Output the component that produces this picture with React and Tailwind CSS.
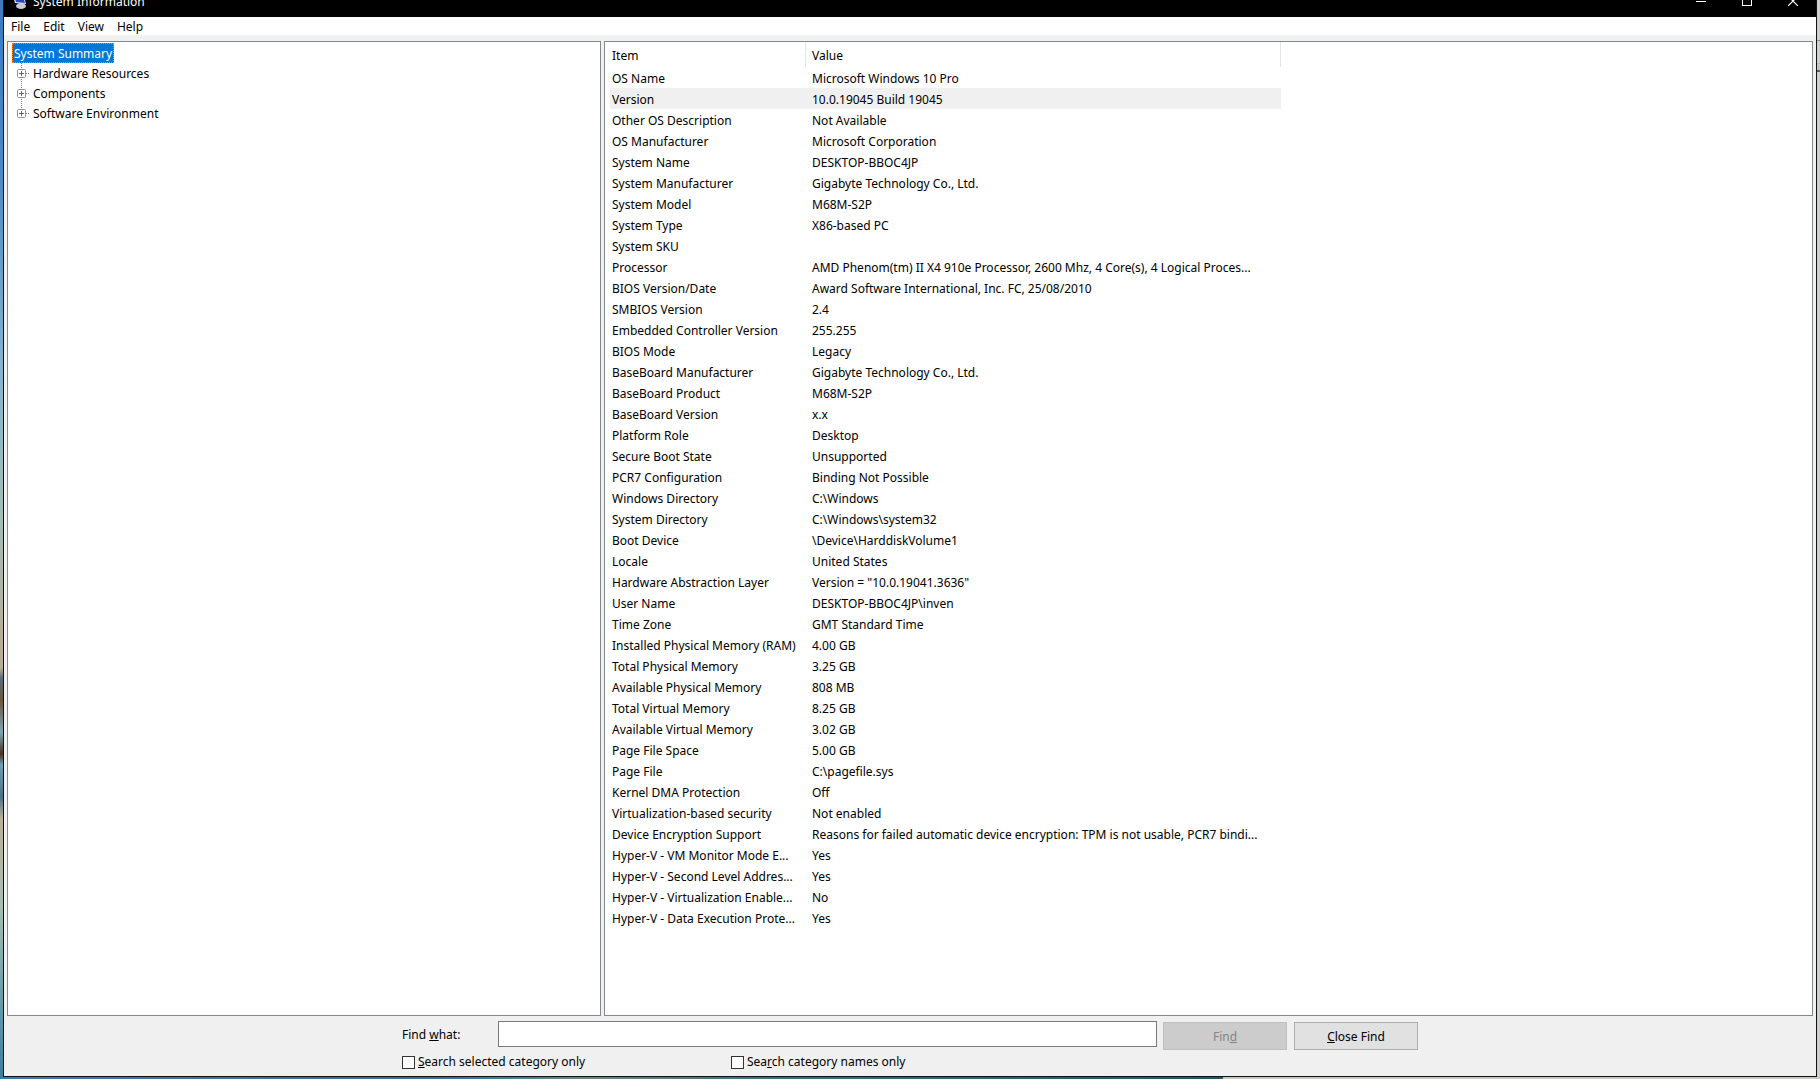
const menus = ['File', 'Edit', 'View', 'Help'];

const categories = ['Hardware Resources', 'Components', 'Software Environment'];

const rows = [
  ['OS Name', 'Microsoft Windows 10 Pro'],
  ['Version', '10.0.19045 Build 19045'],
  ['Other OS Description', 'Not Available'],
  ['OS Manufacturer', 'Microsoft Corporation'],
  ['System Name', 'DESKTOP-BBOC4JP'],
  ['System Manufacturer', 'Gigabyte Technology Co., Ltd.'],
  ['System Model', 'M68M-S2P'],
  ['System Type', 'X86-based PC'],
  ['System SKU', ''],
  ['Processor', 'AMD Phenom(tm) II X4 910e Processor, 2600 Mhz, 4 Core(s), 4 Logical Proces...'],
  ['BIOS Version/Date', 'Award Software International, Inc. FC, 25/08/2010'],
  ['SMBIOS Version', '2.4'],
  ['Embedded Controller Version', '255.255'],
  ['BIOS Mode', 'Legacy'],
  ['BaseBoard Manufacturer', 'Gigabyte Technology Co., Ltd.'],
  ['BaseBoard Product', 'M68M-S2P'],
  ['BaseBoard Version', 'x.x'],
  ['Platform Role', 'Desktop'],
  ['Secure Boot State', 'Unsupported'],
  ['PCR7 Configuration', 'Binding Not Possible'],
  ['Windows Directory', 'C:\\Windows'],
  ['System Directory', 'C:\\Windows\\system32'],
  ['Boot Device', '\\Device\\HarddiskVolume1'],
  ['Locale', 'United States'],
  ['Hardware Abstraction Layer', 'Version = "10.0.19041.3636"'],
  ['User Name', 'DESKTOP-BBOC4JP\\inven'],
  ['Time Zone', 'GMT Standard Time'],
  ['Installed Physical Memory (RAM)', '4.00 GB'],
  ['Total Physical Memory', '3.25 GB'],
  ['Available Physical Memory', '808 MB'],
  ['Total Virtual Memory', '8.25 GB'],
  ['Available Virtual Memory', '3.02 GB'],
  ['Page File Space', '5.00 GB'],
  ['Page File', 'C:\\pagefile.sys'],
  ['Kernel DMA Protection', 'Off'],
  ['Virtualization-based security', 'Not enabled'],
  ['Device Encryption Support', 'Reasons for failed automatic device encryption: TPM is not usable, PCR7 bindi...'],
  ['Hyper-V - VM Monitor Mode E...', 'Yes'],
  ['Hyper-V - Second Level Addres...', 'Yes'],
  ['Hyper-V - Virtualization Enable...', 'No'],
  ['Hyper-V - Data Execution Prote...', 'Yes'],
];

function AppIcon() {
  return (
    <svg width="14" height="16" viewBox="0 0 14 16">
      <ellipse cx="8" cy="13" rx="5" ry="3" fill="#c9ccd6" />
      <path d="M0 3 L11 3 L13 11 L2 10 Z" fill="#e4e8f2" />
      <path d="M1 3 L10 4 L12 10 L3 9 Z" fill="#2b45c0" />
      <path d="M6 4 L10 4 L11 7 Z" fill="#8fa4ee" />
    </svg>
  );
}

function TitleBar() {
  return (
    <header className="-mt-[15px] flex h-8 shrink-0 items-center bg-black pl-[9px] text-white">
      <AppIcon />
      <h1 className="ml-[6px] flex-1 pt-[2px]">System Information</h1>
      <button type="button" aria-label="Minimize" className="flex h-full w-[46px] items-center justify-center">
        <svg width="10" height="10" viewBox="0 0 10 10">
          <path d="M0 5.5H10" stroke="currentColor" />
        </svg>
      </button>
      <button type="button" aria-label="Maximize" className="flex h-full w-[46px] items-center justify-center">
        <svg width="10" height="10" viewBox="0 0 10 10">
          <rect x="0.5" y="0.5" width="9" height="9" fill="none" stroke="currentColor" />
        </svg>
      </button>
      <button type="button" aria-label="Close" className="flex h-full w-[46px] items-center justify-center">
        <svg width="10" height="10" viewBox="0 0 10 10">
          <path d="M0 0L10 10M10 0L0 10" stroke="currentColor" strokeWidth="1.2" />
        </svg>
      </button>
    </header>
  );
}

function CategoryTree() {
  return (
    <nav className="w-[594px] shrink-0 border border-[#828790] bg-white pt-px pl-1">
      <button type="button" className="block h-5 border border-dotted border-[#ff8728] bg-[#0078d7] px-px leading-5 text-white">
        System Summary
      </button>
      <ul>
        {categories.map((name, i) => (
          <li key={name} className="flex h-5 items-center">
            <button type="button" aria-label={`Expand ${name}`} className="ml-[5px]">
              <svg width="13" height="20" viewBox="0 0 13 20">
                <path d="M4.5 0V6M9 10.5H13" stroke="#808080" strokeDasharray="1 1" />
                {i < categories.length - 1 && <path d="M4.5 16V20" stroke="#808080" strokeDasharray="1 1" />}
                <rect x="0.5" y="6.5" width="8" height="8" rx="1" fill="#fff" stroke="#919191" />
                <path d="M2 10.5H7M4.5 8V13" stroke="#4b63a7" />
              </svg>
            </button>
            <span className="ml-[3px] pt-[2px]">{name}</span>
          </li>
        ))}
      </ul>
    </nav>
  );
}

function Details() {
  return (
    <main className="min-w-0 flex-1 overflow-hidden border border-[#828790] bg-white">
      <table className="w-[676px] table-fixed border-separate border-spacing-0 text-left whitespace-nowrap">
        <colgroup>
          <col className="w-[201px]" />
          <col />
        </colgroup>
        <thead>
          <tr className="h-[25px]">
            <th className="border-r border-[#e5e5e5] pt-[2px] pl-[7px] font-normal">Item</th>
            <th className="border-r border-[#e5e5e5] pt-[2px] pl-[6px] font-normal">Value</th>
          </tr>
        </thead>
        <tbody>
          {rows.map(([item, value]) => (
            <tr key={item} className="h-[21px]">
              <td className={`border-l-[5px] border-transparent bg-clip-padding pt-[2px] pl-[2px] ${item === 'Version' ? 'bg-[#f0f0f0]' : ''}`}>
                {item}
              </td>
              <td className={`pt-[2px] pl-[6px] ${item === 'Version' ? 'bg-[#f0f0f0]' : ''}`}>{value}</td>
            </tr>
          ))}
        </tbody>
      </table>
    </main>
  );
}

function FindBar() {
  return (
    <form className="mx-auto w-[1016px] shrink-0 pt-[5px] pb-[5px]" onSubmit={(e) => e.preventDefault()}>
      <div className="flex items-start">
        <label htmlFor="find" className="w-24 pt-[5px]">
          Find <u>w</u>hat:
        </label>
        <input id="find" type="text" className="h-[26px] min-w-0 flex-1 border border-[#7a7a7a] bg-white px-1 outline-none" />
        <button type="submit" disabled className="mt-px ml-[6px] h-7 w-[124px] border border-[#bfbfbf] bg-[#cccccc] pt-px text-[#838383]">
          Fin<u>d</u>
        </button>
        <button type="button" className="mt-px ml-[7px] h-7 w-[124px] border border-[#adadad] bg-[#e1e1e1] pt-px">
          <u>C</u>lose Find
        </button>
      </div>
      <div className="mt-[3px] flex">
        <label className="flex w-[329px] items-center gap-[3px]">
          <input type="checkbox" className="size-[13px] appearance-none border border-[#333333] bg-white" />
          <span>
            <u>S</u>earch selected category only
          </span>
        </label>
        <label className="flex items-center gap-[3px]">
          <input type="checkbox" className="size-[13px] appearance-none border border-[#333333] bg-white" />
          <span>
            Sea<u>r</u>ch category names only
          </span>
        </label>
      </div>
    </form>
  );
}

// slivers of the desktop that show around the window
function DesktopLeft() {
  return (
    <div className="w-[3px] shrink-0 bg-[linear-gradient(#3b7cc0,#4a8ac8_16%,#86b3cc_34%,#a3bdb5_48%,#b8ad98_60%,#b8ad98_62%,#5b6b76_63%,#6b5540_65%,#7fa5b0_68%,#4a3020_70%,#6f9fb0_71%,#4c7085_74%,#b8b09a_76%,#a9bdb0_84%,#5f98a8_94%,#3b7f9c)]" />
  );
}

function DesktopRight() {
  return (
    <div className="flex w-[3px] shrink-0 flex-col bg-[#cfcfcf]">
      <div className="mt-10 h-px bg-[#8f8f8f]" />
      <div className="mt-[22px] h-[7px] border-t border-[#b5b5b5] bg-[#c4c4c4]" />
      <div className="h-[2px] bg-[#5c5c5c]" />
    </div>
  );
}

export default function App() {
  return (
    <div className="flex h-screen flex-col overflow-hidden font-['Noto_Sans',sans-serif] text-[12px] leading-[18px] text-black">
      <div className="flex min-h-0 flex-1">
        <DesktopLeft />
        <div className="flex min-w-0 flex-1 flex-col border-x border-b border-[#111111] bg-[#f0f0f0]">
          <TitleBar />
          <div role="menubar" className="flex h-[18px] shrink-0 items-center gap-[13px] bg-white pt-[2px] pl-[7px]">
            {menus.map((menu) => (
              <button key={menu} type="button" role="menuitem">
                {menu}
              </button>
            ))}
          </div>
          <div className="mt-[6px] flex min-h-0 flex-1 gap-[3px] px-[3px]">
            <CategoryTree />
            <Details />
          </div>
          <FindBar />
        </div>
        <DesktopRight />
      </div>
      <div className="flex h-[2px] shrink-0">
        <div className="w-[1223px] bg-[linear-gradient(90deg,#3a7f9e,#2f719b_35%,#6b8580_48%,#3d6a75_65%,#2a5560)]" />
        <div className="flex-1 bg-[#c6c7c0]" />
      </div>
    </div>
  );
}
